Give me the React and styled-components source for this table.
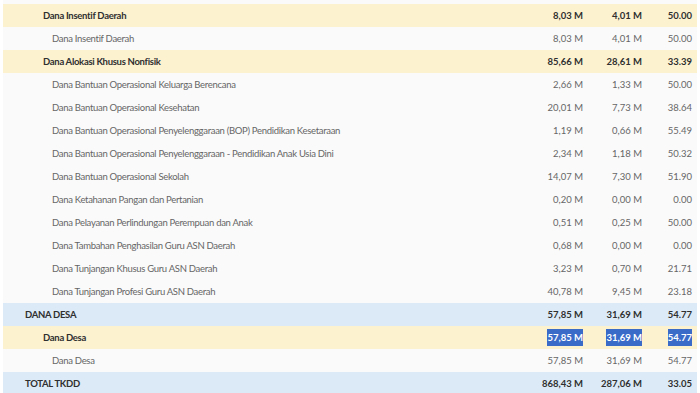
import styled, { createGlobalStyle } from "styled-components";

const GlobalStyle = createGlobalStyle`
  html, body {
    margin: 0;
    padding: 0;
    background: #ffffff;
  }
  body {
    font-family: "Lato", "Liberation Sans", sans-serif;
  }
`;

const rowColors = {
  group: "#dbeaf6",
  sub: "#fcf2d0",
  item: "#fafafa",
};

const indents = {
  group: "22px",
  sub: "40px",
  item: "49px",
};

const Table = styled.div`
  width: 694px;
  margin-left: 3px;
  display: flex;
  flex-direction: column;
`;

const Filler = styled.div`
  height: 4px;
  background: ${rowColors.item};
`;

const Row = styled.div`
  display: grid;
  grid-template-columns: 505px 75px 59px 50px;
  align-items: center;
  height: 23px;
  padding-right: 5px;
  background: ${(props) => rowColors[props.kind]};
  color: ${(props) => (props.kind === "item" ? "#666666" : "#2f2f2f")};
  font-weight: ${(props) => (props.kind === "item" ? 400 : 700)};
  font-size: 9.5px;
`;

const Label = styled.div`
  padding-left: ${(props) => indents[props.kind]};
  white-space: nowrap;
  letter-spacing: -0.3px;
`;

const Num = styled.div`
  text-align: right;
  white-space: nowrap;
`;

// the highlighted figures in the Dana Desa row
const Selected = styled.span`
  background: #3b6bc9;
  color: #ffffff;
  padding: 3px 0;
`;

const rows = [
  ["sub", "Dana Insentif Daerah", "8,03 M", "4,01 M", "50.00"],
  ["item", "Dana Insentif Daerah", "8,03 M", "4,01 M", "50.00"],
  ["sub", "Dana Alokasi Khusus Nonfisik", "85,66 M", "28,61 M", "33.39"],
  ["item", "Dana Bantuan Operasional Keluarga Berencana", "2,66 M", "1,33 M", "50.00"],
  ["item", "Dana Bantuan Operasional Kesehatan", "20,01 M", "7,73 M", "38.64"],
  ["item", "Dana Bantuan Operasional Penyelenggaraan (BOP) Pendidikan Kesetaraan", "1,19 M", "0,66 M", "55.49"],
  ["item", "Dana Bantuan Operasional Penyelenggaraan - Pendidikan Anak Usia Dini", "2,34 M", "1,18 M", "50.32"],
  ["item", "Dana Bantuan Operasional Sekolah", "14,07 M", "7,30 M", "51.90"],
  ["item", "Dana Ketahanan Pangan dan Pertanian", "0,20 M", "0,00 M", "0.00"],
  ["item", "Dana Pelayanan Perlindungan Perempuan dan Anak", "0,51 M", "0,25 M", "50.00"],
  ["item", "Dana Tambahan Penghasilan Guru ASN Daerah", "0,68 M", "0,00 M", "0.00"],
  ["item", "Dana Tunjangan Khusus Guru ASN Daerah", "3,23 M", "0,70 M", "21.71"],
  ["item", "Dana Tunjangan Profesi Guru ASN Daerah", "40,78 M", "9,45 M", "23.18"],
  ["group", "DANA DESA", "57,85 M", "31,69 M", "54.77"],
  ["sub", "Dana Desa", "57,85 M", "31,69 M", "54.77", true],
  ["item", "Dana Desa", "57,85 M", "31,69 M", "54.77"],
  ["group", "TOTAL TKDD", "868,43 M", "287,06 M", "33.05"],
];

const Cell = ({ selected, children }) => (
  <Num>{selected ? <Selected>{children}</Selected> : children}</Num>
);

export default function App() {
  return (
    <>
      <GlobalStyle />
      <Table>
        <Filler />
        {rows.map(([kind, label, a, b, pct, selected], i) => (
          <Row kind={kind} key={i}>
            <Label kind={kind}>{label}</Label>
            <Cell selected={selected}>{a}</Cell>
            <Cell selected={selected}>{b}</Cell>
            <Cell selected={selected}>{pct}</Cell>
          </Row>
        ))}
      </Table>
    </>
  );
}
